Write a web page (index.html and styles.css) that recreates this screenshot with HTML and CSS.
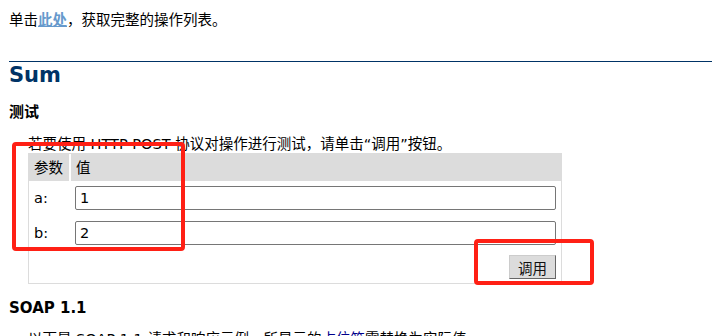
FILE: index.html
```html
<!DOCTYPE html>
<html lang="zh-CN">
<head>
<meta charset="utf-8">
<title>Sum</title>
<link rel="stylesheet" href="styles.css">
</head>
<body>
<div class="content">
  <p class="intro">单击<a class="visited" href="#">此处</a>，获取完整的操作列表。</p>
  <h2>Sum</h2>
  <h3>测试</h3>
  <p class="frmtext">若要使用 HTTP POST 协议对操作进行测试，请单击“调用”按钮。</p>
  <form class="frm">
    <table class="frmtable">
      <tr class="head">
        <td class="frmheader c1">参数</td>
        <td class="frmheader c2">值</td>
      </tr>
      <tr class="row-a">
        <td class="lbl">a:</td>
        <td class="fld"><input class="frminput" type="text" name="a" value="1"></td>
      </tr>
      <tr class="row-b">
        <td class="lbl">b:</td>
        <td class="fld"><input class="frminput" type="text" name="b" value="2"></td>
      </tr>
      <tr class="row-btn">
        <td></td>
        <td class="btncell"><button type="button" class="button">调用</button></td>
      </tr>
    </table>
  </form>
  <h3 class="soap">SOAP 1.1</h3>
  <p class="soaptext">以下是 SOAP 1.1 请求和响应示例。所显示的<span class="value">占位符</span>需替换为实际值。</p>
</div>
<div class="mark mark-params"></div>
<div class="mark mark-button"></div>
</body>
</html>
```
FILE: styles.css
```css
html, body {
  margin: 0;
  padding: 0;
  background: #ffffff;
}

body {
  color: #000000;
  font-family: "DejaVu Sans", "Noto Sans CJK SC", sans-serif;
  font-size: 14.5px;
  overflow: hidden;
}

.content {
  padding-left: 28px;
}

p {
  margin: 0;
}

.intro {
  margin: 11px 0 0 -19px;
  line-height: 19px;
}

a.visited {
  color: #6699cc;
  font-weight: bold;
  text-decoration: underline;
}

h2 {
  margin: 31px 0 0 -19px;
  border-top: 1px solid #003366;
  color: #003366;
  font-size: 21px;
  font-weight: bold;
  line-height: 27px;
}

h3 {
  margin: 14px 0 0 -19px;
  font-size: 15px;
  font-weight: bold;
  line-height: 19px;
}

.frmtext {
  margin-top: 13px;
  line-height: 18px;
}

.frm {
  margin: 0;
}

.frmtable {
  width: 534px;
  border: 1px solid #dcdcdc;
  border-spacing: 0;
  border-collapse: separate;
}

.frmtable td {
  padding: 0;
  vertical-align: middle;
  line-height: 18px;
}

.frmheader {
  height: 27px;
  background: #dcdcdc;
  padding-left: 5px !important;
}

.frmheader.c1 {
  width: 35px;
  border-right: 2px solid #ffffff;
}

.lbl {
  padding-left: 5px !important;
}

.fld {
  padding-left: 4px !important;
  padding-right: 5px !important;
}

.row-a td {
  padding-top: 5px !important;
  padding-bottom: 6px !important;
}

.row-b td {
  padding-top: 5px !important;
  padding-bottom: 5px !important;
}

.row-btn td {
  padding-top: 5px !important;
  padding-bottom: 4px !important;
}

.frminput {
  display: block;
  box-sizing: border-box;
  width: 481px;
  height: 24px;
  margin: 0;
  padding: 0 4px;
  border: 1px solid #767676;
  border-radius: 2px;
  background: #ffffff;
  color: #000000;
  font-family: "DejaVu Sans", "Noto Sans CJK SC", sans-serif;
  font-size: 14.5px;
}

.btncell {
  text-align: right;
  padding-right: 5px !important;
}

.button {
  box-sizing: border-box;
  width: 47px;
  height: 24px;
  margin: 0;
  padding: 0;
  background: #dcdcdc;
  color: #111111;
  font-family: "DejaVu Sans", "Noto Sans CJK SC", sans-serif;
  font-size: 14.5px;
  border-top: 1px solid #cccccc;
  border-left: 1px solid #cccccc;
  border-bottom: 1px solid #666666;
  border-right: 1px solid #666666;
  vertical-align: top;
}

.soap {
  margin-top: 15px;
}

.soaptext {
  margin-top: 12px;
  line-height: 19px;
}

.value {
  color: #00008b;
}

.mark {
  position: absolute;
  box-sizing: border-box;
  border: 4px solid #ff2015;
  border-radius: 4px;
}

.mark-params {
  left: 12px;
  top: 142px;
  width: 173px;
  height: 109px;
}

.mark-button {
  left: 474px;
  top: 239px;
  width: 120px;
  height: 46px;
}
```
